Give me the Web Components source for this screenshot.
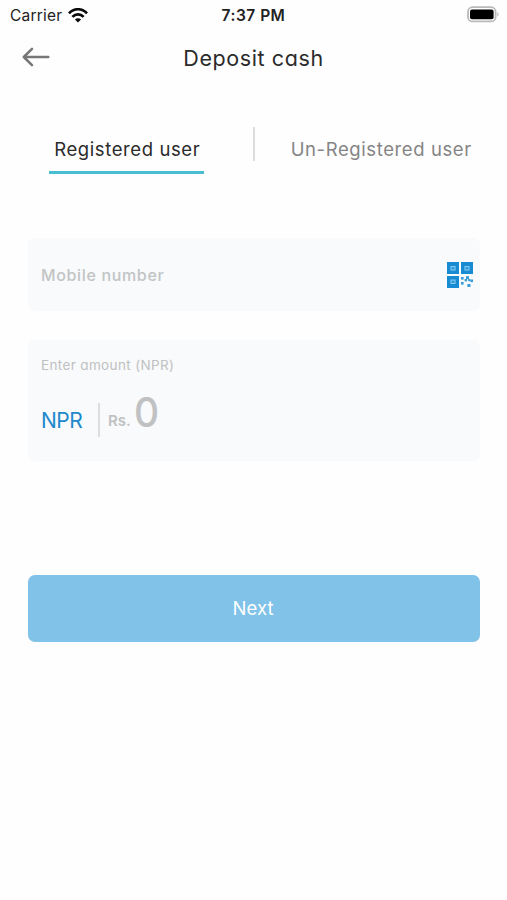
<!DOCTYPE html>
<html lang="en">
<head>
<meta charset="utf-8">
<title>Deposit cash</title>
<style>
    body {
        margin: 0;
        background: #fefefe;
        font-family: Inter, "Open Sans", sans-serif;
        font-feature-settings: "cv11";
        color: #2b2b2b;
    }
</style>
</head>
<body>
<deposit-screen></deposit-screen>

<script>
class StatusBar extends HTMLElement {
    constructor() {
        super();
        this.attachShadow({ mode: 'open' }).innerHTML = `
<style>
    :host {
        display: grid;
        grid-template-columns: 1fr auto 1fr;
        align-items: center;
        height: 30px;
        padding: 0 8px 0 10px;
        font-size: 15.5px;
        font-feature-settings: normal;
        color: #222;
    }
    .left { display: flex; align-items: center; gap: 6px; }
    .carrier { letter-spacing: 0.2px; }
    .time { font-weight: 600; font-size: 15.5px; letter-spacing: 0.5px; margin-right: 2px; }
    .battery { justify-self: end; }
    svg { display: block; }
</style>
<div class="left">
    <span class="carrier">Carrier</span>
    <svg width="20" height="15" viewBox="0 0 20 15" fill="none" stroke="#0a0a0a" stroke-width="2.7">
        <path d="M1 5.3C6-.1 14-.1 19 5.3"/>
        <path d="M4.4 8.9C7.6 5.6 12.4 5.6 15.6 8.9"/>
        <path d="M10 14.6L6.9 11.6C8.6 9.9 11.4 9.9 13.1 11.6Z" fill="#0a0a0a" stroke="none"/>
    </svg>
</div>
<span class="time">7:37 PM</span>
<svg class="battery" width="33" height="18" viewBox="0 0 33 18">
    <rect x="2" y="1.2" width="27.6" height="14.2" rx="4.5" fill="#fff" stroke="#b9b9b9" stroke-width="1.8"/>
    <rect x="4" y="3.4" width="23.6" height="9.8" rx="2" fill="#000"/>
    <path d="M31.5 6Q33.5 8.3 31.5 10.6Z" fill="#aaa"/>
</svg>
`;
    }
}

class ScreenHeader extends HTMLElement {
    constructor() {
        super();
        this.attachShadow({ mode: 'open' }).innerHTML = `
<style>
    :host {
        display: grid;
        grid-template-columns: 60px 1fr 60px;
        align-items: center;
        height: 56px;
    }
    svg { display: block; margin: -2px 0 0 22px; }
    .title { text-align: center; font-size: 21.5px; letter-spacing: 0.6px; }
</style>
<svg width="28" height="20" viewBox="0 0 28 20" fill="none" stroke="#777" stroke-width="2.5" stroke-linecap="round" stroke-linejoin="round">
    <path d="M26.3 10H2.5M10 1.8L1.8 10L10 18.2"/>
</svg>
<div class="title"><slot></slot></div>
`;
    }
}

class TabItem extends HTMLElement {
    constructor() {
        super();
        this.attachShadow({ mode: 'open' }).innerHTML = `
<style>
    :host {
        display: block;
        box-sizing: border-box;
        height: 49px;
        padding: 11px 4px 0 5px;
        font-size: 18.5px;
        line-height: 26px;
        letter-spacing: 0.6px;
        white-space: nowrap;
        color: #858585;
        border-bottom: 3px solid transparent;
    }
    :host([active]) {
        margin-left: 1px;
        color: #2b2b2b;
        border-color: #49bdd2;
    }
</style>
<slot></slot>
`;
    }
}

class TabBar extends HTMLElement {
    constructor() {
        super();
        this.attachShadow({ mode: 'open' }).innerHTML = `
<style>
    :host {
        display: grid;
        grid-template-columns: 1fr 2px 1fr;
        justify-items: center;
        margin-top: 39px;
    }
    .divider { width: 2px; height: 34px; margin-top: 2px; background: #dcdcdc; }
</style>
<slot name="first"></slot>
<div class="divider"></div>
<slot name="second"></slot>
`;
    }
}

class QrIcon extends HTMLElement {
    constructor() {
        super();
        this.attachShadow({ mode: 'open' }).innerHTML = `
<style>
    :host { display: block; }
    svg { display: block; }
</style>
<svg width="26" height="26" viewBox="0 0 26 26" fill="#188cd3">
    <path d="M0 0h12v12H0zM14 0h12v12H14zM0 14h12v12H0z"/>
    <g fill="#2b9add" stroke="#8dcbf0" stroke-width="1">
        <rect x="4" y="4.5" width="4" height="3.5"/>
        <rect x="18" y="4.5" width="4" height="3.5"/>
        <rect x="4" y="18" width="4" height="3.5"/>
    </g>
    <g fill="#379bd9">
        <rect x="14" y="15" width="2.6" height="2.6"/>
        <rect x="19" y="14.2" width="3" height="3"/>
        <rect x="17.6" y="17" width="2.4" height="2.4"/>
        <rect x="21.2" y="17" width="2.2" height="2.2"/>
        <rect x="23.4" y="17.5" width="2.6" height="2.6"/>
        <rect x="14" y="20" width="2.6" height="2.6"/>
        <rect x="20.4" y="22" width="3" height="3"/>
    </g>
</svg>
`;
    }
}

class MobileField extends HTMLElement {
    constructor() {
        super();
        this.attachShadow({ mode: 'open' }).innerHTML = `
<style>
    :host {
        display: flex;
        align-items: center;
        justify-content: space-between;
        box-sizing: border-box;
        height: 73px;
        padding: 0 7px 0 13px;
        border-radius: 6px;
        background: #f8fafc;
        color: #c2c4c5;
        font-size: 16px;
        font-weight: 500;
        letter-spacing: 0.65px;
    }
</style>
<span><slot></slot></span>
<qr-icon></qr-icon>
`;
    }
}

class AmountField extends HTMLElement {
    constructor() {
        super();
        this.attachShadow({ mode: 'open' }).innerHTML = `
<style>
    :host {
        display: block;
        box-sizing: border-box;
        height: 121px;
        padding: 16px 13px 0;
        border-radius: 6px;
        background: #f8fafc;
        color: #c0c1c2;
    }
    .label { font-size: 13.5px; line-height: 18px; letter-spacing: 0.36px; }
    .row { display: flex; align-items: center; height: 34px; margin-top: 29px; }
    .currency { width: 57px; font-size: 21px; color: #2089cc; letter-spacing: -0.5px; }
    .bar { width: 2px; height: 34px; background: #dcdfe1; }
    .prefix { width: 26px; margin-left: 8px; font-size: 15px; font-weight: 600; }
    .value { font-size: 41px; line-height: 42px; font-weight: 500; margin-top: -17px; transform: scaleX(0.95); transform-origin: left; }
</style>
<div class="label"><slot></slot></div>
<div class="row">
    <span class="currency">NPR</span>
    <span class="bar"></span>
    <span class="prefix">Rs.</span>
    <span class="value">0</span>
</div>
`;
    }
}

class PrimaryButton extends HTMLElement {
    constructor() {
        super();
        this.attachShadow({ mode: 'open' }).innerHTML = `
<style>
    :host { display: block; }
    button {
        display: block;
        width: 100%;
        height: 67px;
        padding: 0 2px 1px 0;
        border: 0;
        border-radius: 7px;
        background: #80c2e8;
        color: #fff;
        font: inherit;
        font-size: 18.5px;
        letter-spacing: 0.1px;
    }
</style>
<button type="button"><slot></slot></button>
`;
    }
}

class DepositScreen extends HTMLElement {
    constructor() {
        super();
        this.attachShadow({ mode: 'open' }).innerHTML = `
<style>
    :host { display: block; height: 900px; overflow: hidden; }
    form { display: flex; flex-direction: column; margin: 64px 27px 0 28px; }
    amount-field { margin-top: 29px; }
    primary-button { margin-top: 114px; }
</style>
<status-bar></status-bar>
<screen-header>Deposit cash</screen-header>
<tab-bar>
    <tab-item slot="first" active>Registered user</tab-item>
    <tab-item slot="second">Un-Registered user</tab-item>
</tab-bar>
<form>
    <mobile-field>Mobile number</mobile-field>
    <amount-field>Enter amount (NPR)</amount-field>
    <primary-button>Next</primary-button>
</form>
`;
    }
}

customElements.define('status-bar', StatusBar);
customElements.define('screen-header', ScreenHeader);
customElements.define('tab-item', TabItem);
customElements.define('tab-bar', TabBar);
customElements.define('qr-icon', QrIcon);
customElements.define('mobile-field', MobileField);
customElements.define('amount-field', AmountField);
customElements.define('primary-button', PrimaryButton);
customElements.define('deposit-screen', DepositScreen);
</script>
</body>
</html>
